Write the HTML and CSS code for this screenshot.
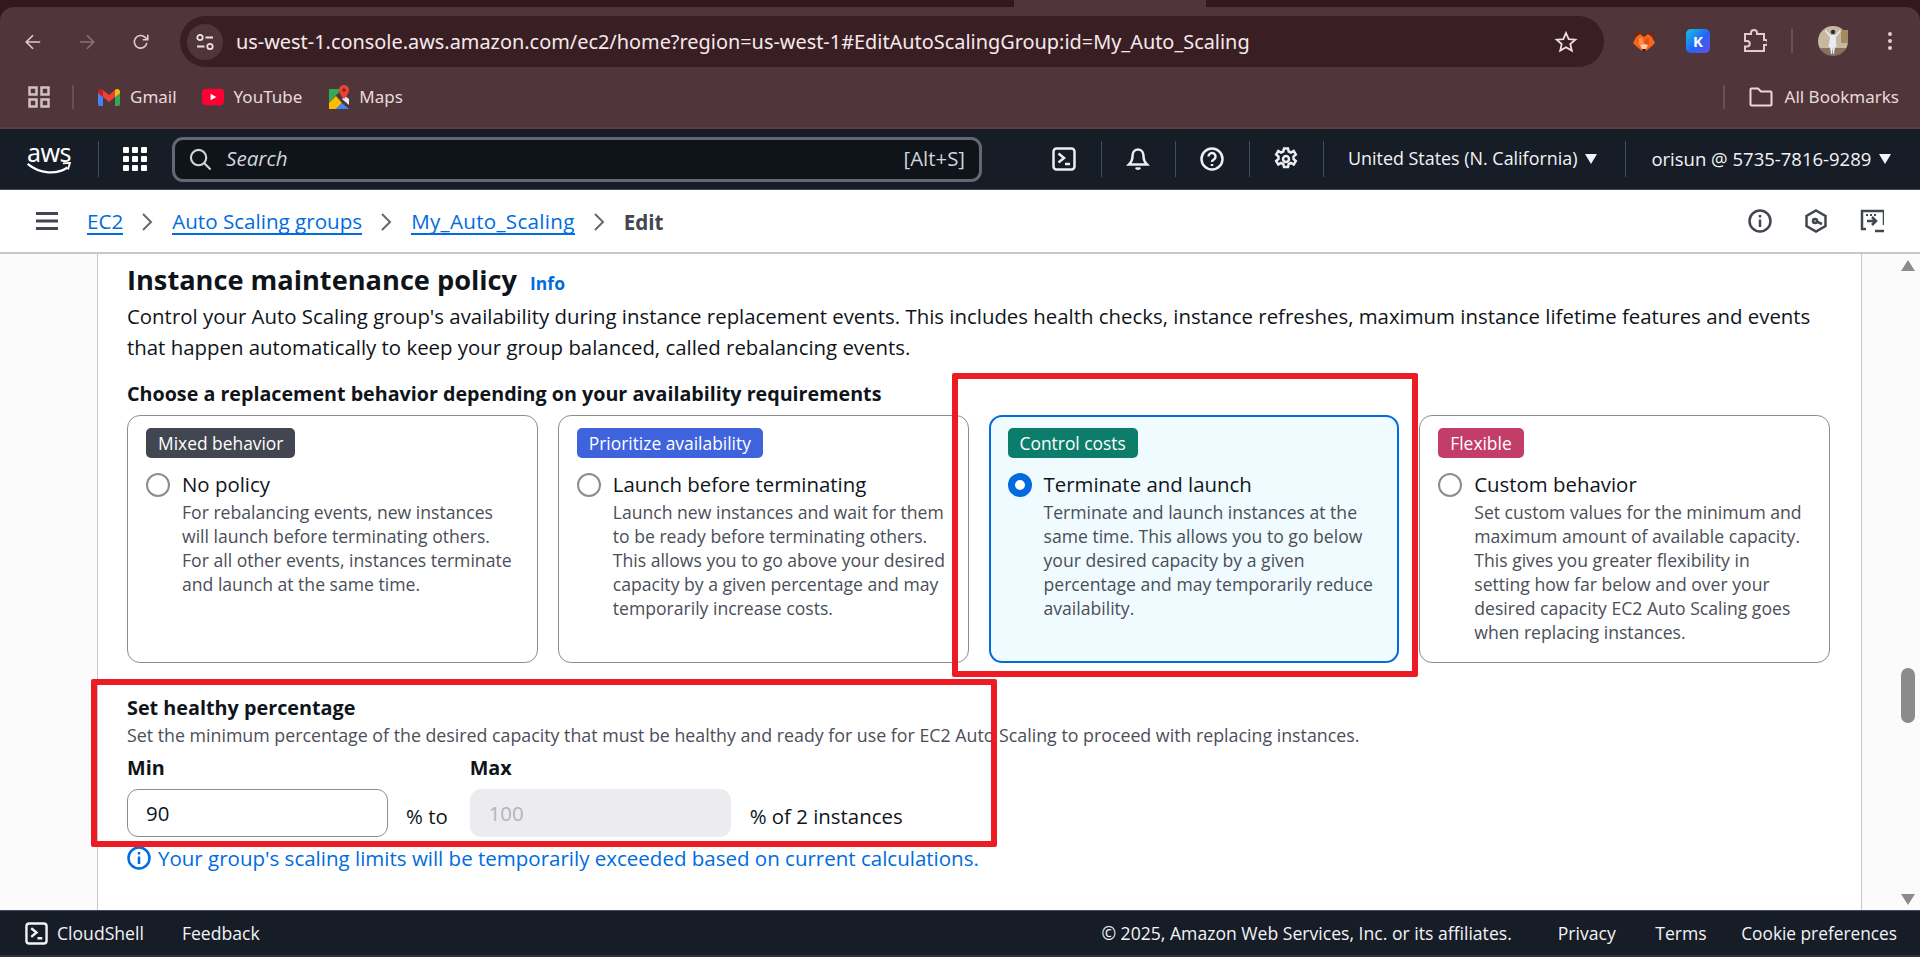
FILE: index.html
```html
<!DOCTYPE html>
<html lang="en">
<head>
<meta charset="utf-8">
<title>Edit Auto Scaling group</title>
<link rel="stylesheet" href="styles.css">
</head>
<body>
<header class="browser">
  <div class="tabstrip"><div class="active-tab"></div></div>
  <div class="toolbar">
    <svg class="tb-ico back" viewBox="0 0 20 20"><path d="M18 10H3M10 2.500 2.500 10l7.500 7.500"/></svg>
    <svg class="tb-ico fwd" viewBox="0 0 20 20"><path d="M2 10h15M10 2.500l7.500 7.500-7.500 7.500"/></svg>
    <svg class="tb-ico reload" viewBox="0 0 20 20"><path d="M16.500 11a7 7 0 1 1-2-6.200L17 7.200M17.500 2v5.500H12"/></svg>
    <div class="omnibox">
      <span class="site-chip"><svg class="tune" viewBox="0 0 20 20"><circle cx="5" cy="5.500" r="2.700"/><path d="M10.500 5.500H18M2 14.500h7.500"/><circle cx="15" cy="14.500" r="2.700"/></svg></span>
      <span class="url">us-west-1.console.aws.amazon.com/ec2/home?region=us-west-1#EditAutoScalingGroup:id=My_Auto_Scaling</span>
      <svg class="star" viewBox="0 0 24 24"><path d="m12 3 2.700 6.100 6.600.6-5 4.400 1.500 6.500L12 17.200l-5.800 3.400 1.500-6.500-5-4.400 6.600-.6z"/></svg>
    </div>
    <svg class="ext fox" viewBox="0 0 24 24"><path fill="#6b2a14" d="M2 0l7 5h6l7-5-1 11H3z"/><path fill="#f6651b" d="M4 8l4-3 4 3 4-3 4 3 3 6-3 3-6 5h-4l-6-5-3-3z"/><path fill="#ff8f4d" d="M7 9l3 0 2 6-5 1z"/><path fill="#e5500f" d="M17 9l-3 0-2 6 5 1z"/><path fill="#ffc9a6" d="M8 16l4-1 4 1-2 4h-4z"/><path fill="#2b1a16" d="M10 20h4l-1 2.500h-2z"/></svg>
    <span class="ext kext">K</span>
    <svg class="ext puzzle" viewBox="0 0 24 24"><path d="M2 5h6V4a3 3 0 0 1 6 0v1h7v6h1.500a2.500 2.500 0 0 1 0 5H21v6H2v-4.500h2a2.700 2.700 0 0 0 0-5.500H2z"/></svg>
    <span class="tb-sep"></span>
    <svg class="avatar" viewBox="0 0 30 30"><circle cx="15" cy="15" r="15" fill="#c9b8a0"/><path fill="#a48a63" d="M23 4h7v13h-7z"/><path fill="#5a4236" d="M2 22h26l-5 8H7z" opacity=".6"/><path fill="#e8edf5" d="M12.500 9h5l1 12h-1.500l-1 7h-1l-.5-7-.5 7h-1l-1-7h-1.500z"/><path fill="#e8edf5" d="M8 4l4.500 5h5L22 4l1 1-5 6h-6L7 5z"/><circle cx="15" cy="6" r="2.200" fill="#24303f"/></svg>
    <svg class="menu-dots" viewBox="0 0 6 20"><circle cx="3" cy="3" r="2"/><circle cx="3" cy="10" r="2"/><circle cx="3" cy="17" r="2"/></svg>
  </div>
  <div class="bookmarks">
    <svg class="apps" viewBox="0 0 22 22"><path d="M1.500 1.500h7v7h-7zM13.500 1.500h7v7h-7zM1.500 13.500h7v7h-7zM13.500 13.500h7v7h-7z"/></svg>
    <span class="bm-sep"></span>
    <a class="bm gmail"><svg class="bm-ico" viewBox="0 0 22 18"><path fill="#4285f4" d="M0 3v13a2 2 0 0 0 2 2h3V7z"/><path fill="#34a853" d="M22 3v13a2 2 0 0 1-2 2h-3V7z"/><path fill="#ea4335" d="M5 9V2L11 7l6-5v7l-6 5z"/><path fill="#c5221f" d="M0 3a3 3 0 0 1 5-1v7L0 5z"/><path fill="#fbbc04" d="M22 3a3 3 0 0 0-5-1v7l5-4z"/></svg>Gmail</a>
    <a class="bm yt"><svg class="bm-ico" viewBox="0 0 23 17"><rect width="23" height="17" rx="4" fill="#ff0033"/><path fill="#fff" d="M9 5l6 3.500L9 12z"/></svg>YouTube</a>
    <a class="bm maps"><svg class="bm-ico map-ico" viewBox="0 0 20 24"><path fill="#34a853" d="M0 4h13L0 18z"/><path fill="#fbbc04" d="M0 18l7-7 6 7-6 6H0z"/><path fill="#4285f4" d="M7 24l6-6 7 6z"/><path fill="#e8eaed" d="M13 14l7 6v-6l-4-3z"/><path fill="#ea4335" d="M15 0a5 5 0 0 1 5 5c0 4-5 9-5 9s-5-5-5-9a5 5 0 0 1 5-5z"/><circle cx="15" cy="5" r="1.800" fill="#8f1d14"/></svg>Maps</a>
    <span class="bm-spacer"></span>
    <span class="bm-sep right"></span>
    <a class="bm all"><svg class="folder" viewBox="0 0 24 20"><path d="M1.500 2.500a1 1 0 0 1 1-1h6.500l3 3h9.500a1 1 0 0 1 1 1v12a1 1 0 0 1-1 1h-19a1 1 0 0 1-1-1z"/></svg>All Bookmarks</a>
  </div>
</header>

<nav class="topnav">
  <a class="aws-logo"><span class="aws-word">aws</span><svg class="aws-smile" viewBox="0 0 48 14"><path class="smile-a" d="M1 2c13 11 31 12 43 4"/><path class="smile-b" d="M39 1.500l7.500-.5-2 7"/></svg></a>
  <span class="nav-sep logo-sep"></span>
  <svg class="services" viewBox="0 0 24 24"><g><rect x="0" y="0" width="6" height="6" rx="1"/><rect x="9" y="0" width="6" height="6" rx="1"/><rect x="18" y="0" width="6" height="6" rx="1"/><rect x="0" y="9" width="6" height="6" rx="1"/><rect x="9" y="9" width="6" height="6" rx="1"/><rect x="18" y="9" width="6" height="6" rx="1"/><rect x="0" y="18" width="6" height="6" rx="1"/><rect x="9" y="18" width="6" height="6" rx="1"/><rect x="18" y="18" width="6" height="6" rx="1"/></g></svg>
  <div class="search">
    <svg class="search-ico" viewBox="0 0 24 24"><circle cx="10" cy="10" r="8"/><path d="M16 16l6.500 6.500"/></svg>
    <span class="search-text">Search</span>
    <span class="search-key">[Alt+S]</span>
  </div>
  <svg class="nav-ico first" viewBox="0 0 24 24"><rect x="1.500" y="1.500" width="21" height="21" rx="3"/><path d="M6.500 6.500l5.500 4.500-5.500 4.500M13 17h5"/></svg>
  <span class="nav-sep"></span>
  <svg class="nav-ico" viewBox="0 0 24 24"><path d="M12 2.500c-4 0-5.500 3.500-5.500 6.500 0 4-1 6-3.500 8.500h18c-2.500-2.500-3.500-4.500-3.500-8.500 0-3-1.500-6.500-5.500-6.500zM10 20.500a2.200 2.200 0 0 0 4 0"/></svg>
  <span class="nav-sep"></span>
  <svg class="nav-ico" viewBox="0 0 24 24"><circle cx="12" cy="12" r="10.500"/><path d="M8.500 9.500a3.500 3.500 0 1 1 5.300 3c-1.200.7-1.800 1.300-1.800 2.500"/><path d="M12 17v2"/></svg>
  <span class="nav-sep"></span>
  <svg class="nav-ico" viewBox="0 0 24 24"><circle cx="12" cy="12" r="3"/><path d="M10 1.500h4l.7 3 2.300 1 2.700-1.600 2.100 3.500-2.300 2.100v2.500l2.300 2.100-2.100 3.500-2.700-1.600-2.300 1-.7 3h-4l-.7-3-2.300-1-2.700 1.600-2.100-3.500 2.300-2.100V9.500L2.200 7.400l2.100-3.500L7 5.500l2.300-1z"/></svg>
  <span class="nav-sep"></span>
  <span class="nav-text region">United States (N. California)</span><span class="caret"></span>
  <span class="nav-sep acct-sep"></span>
  <span class="nav-text acct">orisun @ 5735-7816-9289</span><span class="caret"></span>
</nav>

<div class="subnav">
  <svg class="hamburger" viewBox="0 0 22 18"><path d="M0 1.500h22M0 9h22M0 16.500h22"/></svg>
  <a class="crumb c1">EC2</a>
  <svg class="chev" viewBox="0 0 12 20"><path d="M2 2l8 8-8 8"/></svg>
  <a class="crumb">Auto Scaling groups</a>
  <svg class="chev" viewBox="0 0 12 20"><path d="M2 2l8 8-8 8"/></svg>
  <a class="crumb group-name">My_Auto_Scaling</a>
  <svg class="chev" viewBox="0 0 12 20"><path d="M2 2l8 8-8 8"/></svg>
  <span class="crumb-current">Edit</span>
  <span class="sub-spacer"></span>
  <svg class="sub-ico" viewBox="0 0 24 24"><circle cx="12" cy="12" r="10.500"/><path d="M12 10.500V18M12 6v2.500"/></svg>
  <svg class="sub-ico" viewBox="0 0 24 24"><path d="M12 1.500l9.500 5.500v10L12 22.500 2.500 17V7z"/><circle cx="11" cy="12" r="2"/><path d="M12.500 12.500L18 15"/></svg>
  <svg class="sub-ico last" viewBox="0 0 24 24"><path d="M6 20H2V2h22v14"/><path d="M7 12h9M12 8l4 4-4 4"/><path d="M15 22h9"/><path class="dots" d="M6 5h2v2H6zM10 5h2v2h-2zM14 5h2v2h-2z"/></svg>
</div>

<div class="workspace">
  <aside class="gutter"></aside>
  <main class="content">
    <div class="title-row"><h1 class="title">Instance maintenance policy</h1><a class="info">Info</a></div>
    <p class="lede">Control your Auto Scaling group's availability during instance replacement events. This includes health checks, instance refreshes, maximum instance lifetime features and events<br>that happen automatically to keep your group balanced, called rebalancing events.</p>
    <h2 class="choose">Choose a replacement behavior depending on your availability requirements</h2>
    <div class="cards">
      <section class="card">
        <span class="badge b-grey">Mixed behavior</span>
        <div class="option"><span class="radio"></span><span class="opt-title">No policy</span></div>
        <p class="opt-desc">For rebalancing events, new instances<br>will launch before terminating others.<br>For all other events, instances terminate<br>and launch at the same time.</p>
      </section>
      <section class="card">
        <span class="badge b-blue">Prioritize availability</span>
        <div class="option"><span class="radio"></span><span class="opt-title">Launch before terminating</span></div>
        <p class="opt-desc">Launch new instances and wait for them<br>to be ready before terminating others.<br>This allows you to go above your desired<br>capacity by a given percentage and may<br>temporarily increase costs.</p>
      </section>
      <section class="card selected">
        <span class="badge b-green">Control costs</span>
        <div class="option"><span class="radio on"></span><span class="opt-title">Terminate and launch</span></div>
        <p class="opt-desc">Terminate and launch instances at the<br>same time. This allows you to go below<br>your desired capacity by a given<br>percentage and may temporarily reduce<br>availability.</p>
      </section>
      <section class="card">
        <span class="badge b-pink">Flexible</span>
        <div class="option"><span class="radio"></span><span class="opt-title">Custom behavior</span></div>
        <p class="opt-desc">Set custom values for the minimum and<br>maximum amount of available capacity.<br>This gives you greater flexibility in<br>setting how far below and over your<br>desired capacity EC2 Auto Scaling goes<br>when replacing instances.</p>
      </section>
    </div>
    <h3 class="field-title">Set healthy percentage</h3>
    <p class="field-desc">Set the minimum percentage of the desired capacity that must be healthy and ready for use for EC2 Auto Scaling to proceed with replacing instances.</p>
    <div class="range">
      <div class="range-col"><label class="range-label">Min</label><input class="num" value="90"></div>
      <span class="unit to">% to</span>
      <div class="range-col"><label class="range-label">Max</label><input class="num off" value="100" disabled></div>
      <span class="unit of">% of 2 instances</span>
    </div>
    <p class="notice"><svg class="notice-ico" viewBox="0 0 24 24"><circle cx="12" cy="12" r="10.500"/><path d="M12 10.500V18M12 6v2.500"/></svg>Your group's scaling limits will be temporarily exceeded based on current calculations.</p>
  </main>
  <aside class="scrollbar">
    <span class="arrow up"></span>
    <span class="thumb"></span>
    <span class="arrow down"></span>
  </aside>
</div>

<footer class="footer">
  <svg class="shell-ico" viewBox="0 0 24 24"><rect x="1.500" y="1.500" width="21" height="21" rx="3"/><path d="M6.500 6.500l5.500 4.500-5.500 4.500M13 17h5"/></svg>
  <a class="foot-link shell">CloudShell</a>
  <a class="foot-link feedback">Feedback</a>
  <span class="foot-spacer"></span>
  <span class="foot-link copy">© 2025, Amazon Web Services, Inc. or its affiliates.</span>
  <a class="foot-link privacy">Privacy</a>
  <a class="foot-link terms">Terms</a>
  <a class="foot-link cookie">Cookie preferences</a>
</footer>

<div class="mark mark-card"></div>
<div class="mark mark-field"></div>
</body>
</html>
```
FILE: styles.css
```css
* { box-sizing: border-box; }
html, body { margin: 0; height: 957px; overflow: hidden; }
body { display: flex; flex-direction: column; width: 1920px; background: #fff; font-family: "Open Sans", "Noto Sans", sans-serif; color: #0f141a; }
svg { display: block; flex: none; }

/* Browser chrome */
.browser { height: 129px; flex: none; background: #33191f; display: flex; flex-direction: column; font-family: "Noto Sans", sans-serif; }
.tabstrip { height: 7px; flex: none; padding-left: 1014px; }
.active-tab { width: 192px; height: 7px; background: #50363b; }
.toolbar { height: 71px; flex: none; background: #50363b; border-radius: 14px 14px 0 0; display: flex; align-items: flex-start; padding: 9px 0 0 24px; }
.tb-ico { fill: none; stroke: #e6c8cc; stroke-width: 1.800; width: 18px; height: 18px; margin-top: 17px; }
.tb-ico.fwd { stroke: #8b7276; margin-left: 36px; }
.tb-ico.reload { margin-left: 36px; }
.omnibox { width: 1424px; height: 51px; margin-left: 30px; background: #391f24; border-radius: 26px; display: flex; align-items: center; padding: 0 26px 0 7px; }
.site-chip { width: 36px; height: 36px; background: #50363b; border-radius: 50%; display: flex; align-items: center; justify-content: center; flex: none; }
.tune { width: 20px; height: 20px; fill: none; stroke: #f0dfe1; stroke-width: 1.800; }
.url { margin-left: 13px; font-size: 19.900px; color: #f5e9eb; flex: 1; white-space: nowrap; }
.star { width: 24px; height: 24px; fill: none; stroke: #f0dfe1; stroke-width: 1.800; }
.ext { width: 24px; height: 24px; margin-top: 13px; }
.fox { margin-left: 28px; }
.kext { margin-left: 30px; border-radius: 5px; background: linear-gradient(135deg, #12c4ea, #2563f5 55%, #6a4be8); color: #fff; font: 700 15px/24px "Noto Sans", sans-serif; text-align: center; }
.puzzle { margin-left: 33px; fill: none; stroke: #e9c9cd; stroke-width: 2; }
.tb-sep { width: 2px; height: 24px; background: #6a5055; margin: 13px 0 0 24px; }
.avatar { width: 30px; height: 30px; margin: 10px 0 0 25px; }
.menu-dots { width: 6px; height: 20px; margin: 15px 0 0 39px; fill: #e9c9cd; }
.bookmarks { flex: 1; background: #50363b; border-bottom: 2px solid #5c3d40; display: flex; align-items: center; padding: 0 21px 11px 28px; font-size: 17px; color: #e8dadc; }
.apps { width: 22px; height: 22px; fill: none; stroke: #d1c1c3; stroke-width: 2.500; }
.bm-sep { width: 2px; height: 24px; background: #6a5055; margin-left: 22px; }
.bm-sep.right { margin: 0 24px 0 0; }
.bm { display: flex; align-items: center; white-space: nowrap; line-height: 22px; }
.bm-ico { width: 22px; height: 18px; margin-right: 10px; }
.gmail { margin-left: 24px; }
.yt { margin-left: 25px; }
.maps { margin-left: 27px; }
.map-ico { width: 20px; height: 24px; }
.bm-spacer { flex: 1; }
.folder { width: 24px; height: 20px; margin-right: 12px; fill: none; stroke: #ecd8da; stroke-width: 2; }

/* AWS top navigation */
.topnav { height: 61px; flex: none; background: #161d26; border-bottom: 1px solid #414d5c; display: flex; align-items: center; padding-left: 25px; color: #fff; }
.aws-logo { width: 48px; display: flex; flex-direction: column; align-items: center; }
.aws-word { font: 400 25px/19px "Noto Sans", sans-serif; color: #fff; letter-spacing: -.5px; }
.aws-smile { width: 48px; height: 13px; }
.smile-a { fill: none; stroke: #fff; stroke-width: 2.500; }
.smile-b { fill: none; stroke: #fff; stroke-width: 2; }
.nav-sep { width: 1px; height: 36px; background: #414d5c; margin: 0 24px 0 25px; flex: none; }
.logo-sep { margin-right: 24px; }
.services { width: 24px; height: 24px; fill: #fff; }
.search { width: 810px; height: 45px; margin-left: 25px; margin-right: 70px; background: #0f141a; border: 3px solid #656871; border-radius: 11px; display: flex; align-items: center; padding: 0 14px 0 14px; color: #d1d5db; }
.search-ico { width: 23px; height: 23px; fill: none; stroke: #d1d5db; stroke-width: 2.200; }
.search-text { margin: 0 0 2px 14px; font-style: italic; font-size: 20.600px; flex: 1; }
.search-key { font-size: 20.400px; margin-bottom: 2px; }
.nav-ico { width: 24px; height: 24px; fill: none; stroke: #eeeef2; stroke-width: 2.500; }
.nav-text { font-size: 17.900px; font-weight: 500; color: #f3f3f7; white-space: nowrap; margin-bottom: 2px; }
.nav-text.acct { font-size: 18.500px; }
.caret { width: 0; height: 0; border-left: 6.500px solid transparent; border-right: 6.500px solid transparent; border-top: 10px solid #f3f3f7; margin-left: 8px; flex: none; }
.acct-sep { margin: 0 25px 0 28px; }

/* Sub navigation */
.subnav { height: 64px; flex: none; background: #fff; border-bottom: 2px solid #c6c6cd; display: flex; align-items: center; padding: 1px 36px 0; font-size: 20.600px; }
.hamburger { width: 22px; height: 18px; stroke: #424650; stroke-width: 3; fill: none; margin: -1px 29px 0 0; }
.crumb { color: #006ce0; border-bottom: 2px solid #006ce0; line-height: 24px; white-space: nowrap; }
.group-name { letter-spacing: .3px; }
.chev { width: 12px; height: 20px; margin: 0 19px 0 18px; fill: none; stroke: #656871; stroke-width: 2; }
.crumb-current { color: #424650; font-weight: 700; }
.sub-spacer { flex: 1; }
.sub-ico { width: 24px; height: 24px; fill: none; stroke: #424650; stroke-width: 2.500; margin: -1px 0 0 32px; }
.sub-ico .dots { fill: #424650; stroke: none; }

/* Workspace */
.workspace { flex: 1; min-height: 0; display: flex; }
.gutter { width: 98px; flex: none; background: #fbfbfb; border-right: 1px solid #c6c6cd; }
.content { flex: 1; padding: 9px 0 0 29px; }
.title-row { display: flex; align-items: center; height: 34px; }
.title { margin: 0; font-size: 27.200px; font-weight: 700; line-height: 34px; color: #0f141a; white-space: nowrap; }
.info { margin: 5px 0 0 13px; font-size: 17.500px; font-weight: 700; color: #006ce0; }
.lede { margin: 4px 0 0; font-size: 20.400px; line-height: 31px; color: #0f141a; white-space: nowrap; }
.choose { margin: 19px 0 0; font-size: 19.700px; font-weight: 700; line-height: 24px; white-space: nowrap; }
.cards { width: 1703px; margin-top: 9px; display: grid; grid-template-columns: repeat(4, 1fr); gap: 20px; }
.card { height: 248px; border: 1px solid #8c8c94; border-radius: 13px; padding: 12px 15px 0 18px; background: #fff; }
.card.selected { border: 2px solid #006ce0; background: #f0fbff; padding: 11px 14px 0 17px; }
.badge { display: inline-block; height: 30px; line-height: 30px; padding: 0 12px; border-radius: 5px; color: #fff; font-size: 17.400px; white-space: nowrap; }
.b-grey { background: #424650; }
.b-blue { background: #3e63dd; }
.b-green { background: #0d7d6b; }
.b-pink { background: #c33d69; }
.option { display: flex; align-items: center; margin-top: 15px; height: 24px; }
.radio { width: 24px; height: 24px; border-radius: 50%; border: 2px solid #8c8c94; background: #fff; flex: none; }
.radio.on { border: 7px solid #006ce0; }
.opt-title { margin: 0 0 2px 12px; font-size: 20.400px; line-height: 24px; white-space: nowrap; }
.opt-desc { margin: 3px 0 0 36px; font-size: 17.600px; line-height: 24px; color: #4a4e58; white-space: nowrap; }
.field-title { margin: 33px 0 0; font-size: 19.800px; font-weight: 700; line-height: 24px; }
.field-desc { margin: 3px 0 0; font-size: 17.800px; line-height: 24px; color: #4a4e58; white-space: nowrap; }
.range { display: flex; align-items: flex-end; margin-top: 9px; }
.range-col { display: flex; flex-direction: column; gap: 9px; }
.range-label { font-size: 19.800px; font-weight: 700; line-height: 24px; }
.num { width: 261px; height: 48px; border: 1px solid #8c8c94; border-radius: 11px; padding: 0 18px; font: 20.400px "Open Sans", sans-serif; color: #0f141a; background: #fff; outline: none; }
.num.off { background: #ebebf0; border-color: #ebebf0; color: #b4b4bb; }
.unit { font-size: 20.400px; line-height: 24px; margin-bottom: 9px; white-space: nowrap; }
.to { margin: 0 22px 9px 18px; }
.of { margin-left: 19px; }
.notice { margin: 9px 0 0; display: flex; align-items: center; font-size: 20.500px; line-height: 24px; color: #006ce0; white-space: nowrap; }
.notice-ico { width: 24px; height: 24px; fill: none; stroke: #006ce0; stroke-width: 2.500; margin-right: 7px; }

/* Scrollbar */
.scrollbar { width: 59px; flex: none; background: #fbfbfb; border-left: 1px solid #c6c6cd; display: flex; flex-direction: column; align-items: flex-end; padding: 6px 4px 4px 0; }
.arrow { width: 0; height: 0; border-left: 7px solid transparent; border-right: 7px solid transparent; flex: none; margin-right: 1px; }
.arrow.up { border-bottom: 11px solid #8b8b8b; }
.arrow.down { border-top: 11px solid #8b8b8b; margin-top: 171px; }
.thumb { width: 14px; height: 55px; border-radius: 7px; background: #8b8b8b; margin: 397px 1px 0 0; flex: none; }

/* Footer */
.footer { height: 47px; flex: none; background: #161d26; border-top: 1px solid #414d5c; border-bottom: 2px solid #2d333c; display: flex; align-items: center; padding: 0 23px 0 25px; color: #f3f3f7; font-size: 17.600px; }
.shell-ico { width: 23px; height: 23px; fill: none; stroke: #f3f3f7; stroke-width: 2.500; margin-right: 9px; }
.foot-link { white-space: nowrap; }
.feedback { margin-left: 38px; }
.foot-spacer { flex: 1; }
.privacy { margin-left: 46px; }
.terms { margin-left: 39.400px; }
.cookie { margin-left: 34.600px; font-size: 17.300px; }

/* Annotation rectangles drawn over the screenshot */
.mark { position: absolute; border: 6px solid #ed1c24; border-radius: 2px; pointer-events: none; }
.mark-card { left: 952px; top: 373px; width: 466px; height: 304px; }
.mark-field { left: 91px; top: 679px; width: 906px; height: 168px; }
```
